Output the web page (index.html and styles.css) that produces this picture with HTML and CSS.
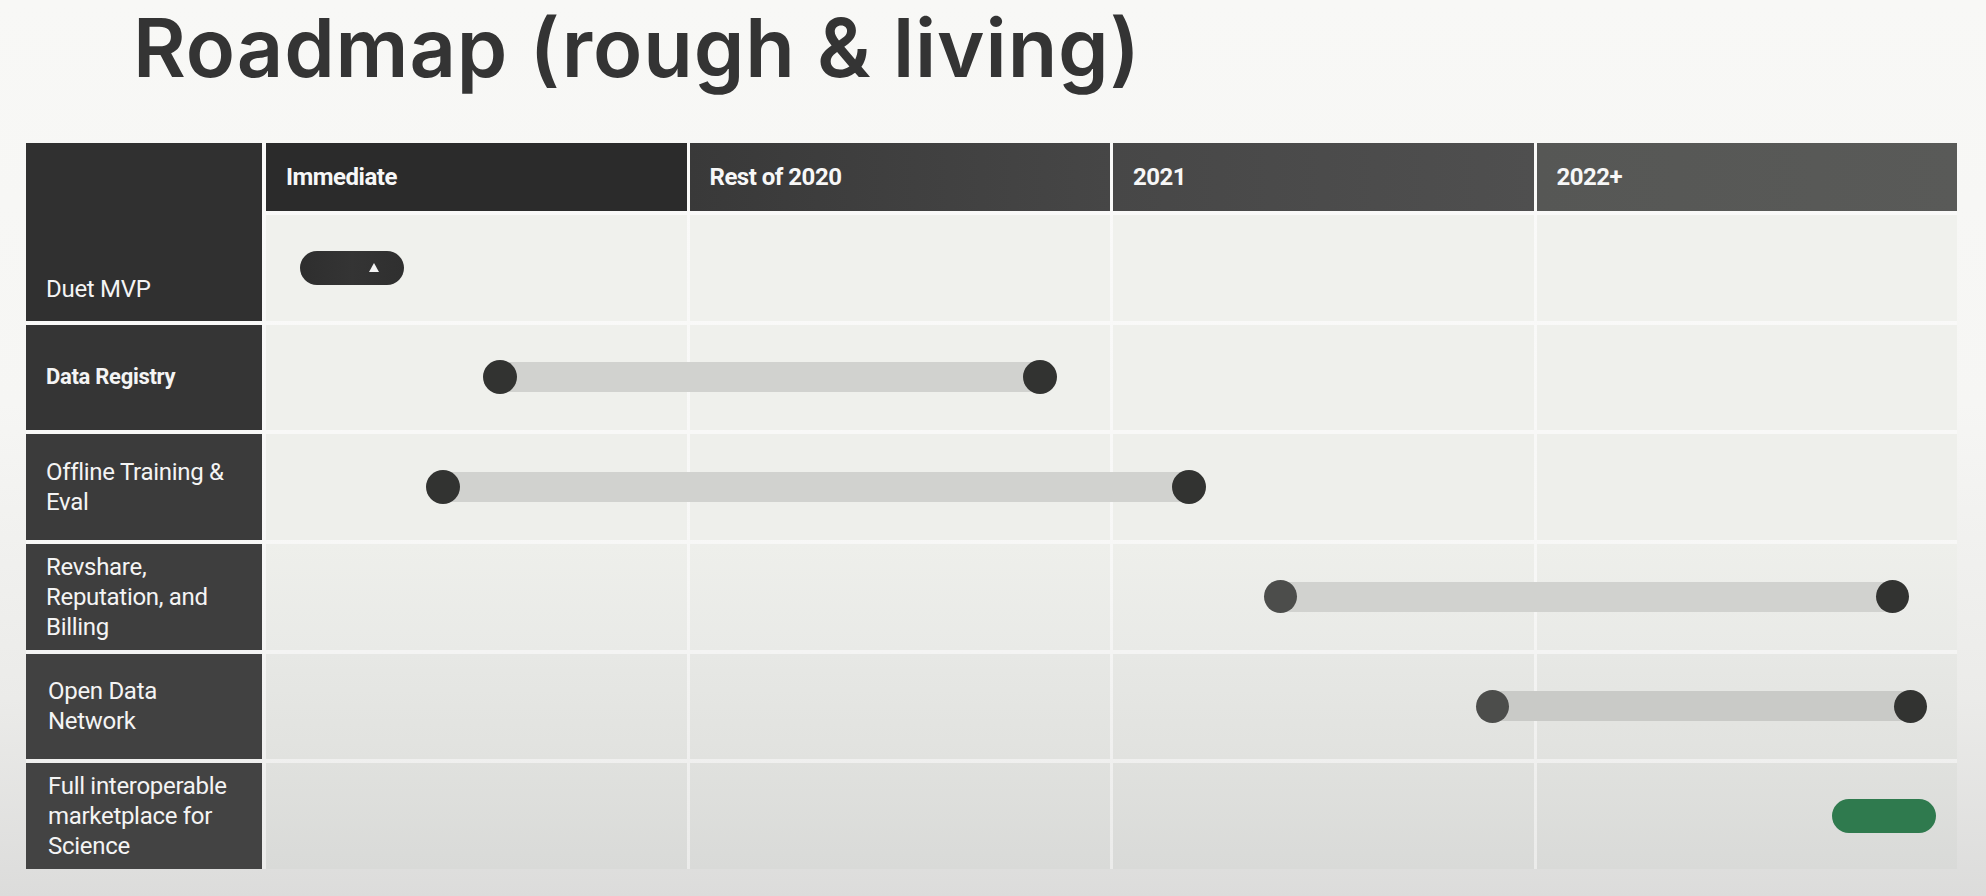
FILE: index.html
```html
<!DOCTYPE html>
<html lang="en">
<head>
<meta charset="utf-8">
<title>Roadmap (rough &amp; living)</title>
<link rel="stylesheet" href="styles.css">
</head>
<body>
<main class="slide">
  <h1 class="title">Roadmap (rough &amp; living)</h1>
  <section class="roadmap">
    <div class="label label-corner">Duet MVP</div>
    <div class="head-row">
      <div class="head h1">Immediate</div>
      <div class="head h2">Rest of 2020</div>
      <div class="head h3">2021</div>
      <div class="head h4">2022+</div>
    </div>

    <div class="track row-1">
      <div class="cell c1"></div><div class="cell c2"></div><div class="cell c3"></div><div class="cell c4"></div>
      <div class="pill pill-dark" style="margin-left:34px;width:104px"><span class="tri"></span></div>
    </div>

    <div class="label label-bold l2">Data Registry</div>
    <div class="track row-2">
      <div class="cell c1"></div><div class="cell c2"></div><div class="cell c3"></div><div class="cell c4"></div>
      <div class="bar" style="margin-left:217px;width:574px"><span class="dot"></span><span class="line"></span><span class="dot"></span></div>
    </div>

    <div class="label l3">Offline Training &amp; Eval</div>
    <div class="track row-3">
      <div class="cell c1"></div><div class="cell c2"></div><div class="cell c3"></div><div class="cell c4"></div>
      <div class="bar" style="margin-left:160px;width:780px"><span class="dot"></span><span class="line"></span><span class="dot"></span></div>
    </div>

    <div class="label l4">Revshare,<br>Reputation, and<br>Billing</div>
    <div class="track row-4">
      <div class="cell c1"></div><div class="cell c2"></div><div class="cell c3"></div><div class="cell c4"></div>
      <div class="bar bar-sm" style="margin-left:998px;width:645px"><span class="dot dot-soft"></span><span class="line"></span><span class="dot"></span></div>
    </div>

    <div class="label l5">Open Data<br>Network</div>
    <div class="track row-5">
      <div class="cell c1"></div><div class="cell c2"></div><div class="cell c3"></div><div class="cell c4"></div>
      <div class="bar bar-sm" style="margin-left:1210px;width:451px"><span class="dot dot-soft"></span><span class="line line-dark"></span><span class="dot"></span></div>
    </div>

    <div class="label l6">Full interoperable<br>marketplace for<br>Science</div>
    <div class="track row-6">
      <div class="cell c1"></div><div class="cell c2"></div><div class="cell c3"></div><div class="cell c4"></div>
      <div class="pill pill-green" style="margin-left:1566px;width:104px"></div>
    </div>
  </section>
</main>
</body>
</html>
```
FILE: styles.css
```css
html, body {
  margin: 0;
  padding: 0;
}

body {
  width: 1986px;
  height: 896px;
  overflow: hidden;
  font-family: Roboto, "Liberation Sans", sans-serif;
  background: linear-gradient(180deg, #f8f8f6 0%, #f6f6f4 45%, #ebebe9 78%, #dcdcdb 100%);
}

.slide {
  display: flex;
  flex-direction: column;
  padding-top: 7px;
}

.title {
  margin: 0 0 53px 133px;
  font-family: Inter, Roboto, "Liberation Sans", sans-serif;
  font-weight: 600;
  font-size: 81px;
  line-height: 83px;
  letter-spacing: 0.9px;
  color: #343434;
}

.roadmap {
  margin-left: 26px;
  width: 1931px;
  height: 726px;
  display: grid;
  grid-template-columns: 236px 1fr;
  grid-template-rows: 68px repeat(6, 1fr);
  gap: 4px;
  background: linear-gradient(180deg, #fafaf9 0%, #f7f7f6 60%, #ebebea 100%);
}

.head-row {
  display: grid;
  grid-template-columns: repeat(4, 1fr);
  gap: 3px;
}

.head {
  display: flex;
  align-items: center;
  padding-left: 20px;
  color: #f7f7f7;
  font-weight: 700;
  font-size: 24px;
  letter-spacing: -0.5px;
}

.h1 { background: #2b2b2b; }
.h2 { background: linear-gradient(90deg, #393939, #464646); }
.h3 { background: linear-gradient(90deg, #474747, #4f4f4f); }
.h4 { background: linear-gradient(90deg, #565755, #595a58); }

.label {
  display: flex;
  align-items: center;
  padding-left: 20px;
  color: #f4f4f4;
  font-size: 24px;
  line-height: 30px;
  letter-spacing: -0.3px;
}

.label-corner {
  grid-row: 1 / 3;
  align-items: flex-end;
  padding-bottom: 17px;
  background: #303030;
}

.label-bold {
  font-weight: 700;
  font-size: 22px;
}

.l2 { background: #353535; }
.l3 { background: #3b3b3b; }
.l4 { background: #3e3e3e; }
.l5 { background: #414141; padding-left: 22px; }
.l6 { background: #434343; padding-left: 22px; }

.track {
  display: grid;
  grid-template-columns: repeat(4, 1fr);
  grid-template-rows: 1fr;
  gap: 3px;
}

.cell {
  grid-row: 1;
  background: #eeefeb;
}

.c1 { grid-column: 1; }
.c2 { grid-column: 2; }
.c3 { grid-column: 3; }
.c4 { grid-column: 4; }

.row-1 .cell { background: #f0f1ed; }
.row-2 .cell { background: #eff0ec; }
.row-3 .cell { background: #eeefeb; }
.row-4 .cell { background: linear-gradient(180deg, #eeefeb, #e9eae7); }
.row-5 .cell { background: linear-gradient(180deg, #e7e8e5, #e1e2df); }
.row-6 .cell { background: linear-gradient(180deg, #e0e1de, #d9dad8); }

.bar, .pill {
  grid-row: 1;
  grid-column: 1 / -1;
  align-self: center;
  justify-self: start;
}

.bar {
  display: flex;
  align-items: center;
}

.dot {
  position: relative;
  flex: 0 0 auto;
  width: 34px;
  height: 34px;
  border-radius: 50%;
  background: #323331;
}

.bar-sm .dot {
  width: 33px;
  height: 33px;
}

.dot-soft {
  background: #4c4d4b;
}

.line {
  flex: 1;
  height: 30px;
  margin: 0 -17px;
  background: #d1d2cf;
}

.line-dark {
  background: #c9cac7;
}

.pill {
  height: 34px;
  border-radius: 17px;
  display: flex;
  align-items: center;
}

.pill-dark {
  background: linear-gradient(90deg, #2e2e2e 0%, #343434 50%, #2f2f2f 100%);
  padding-left: 69px;
  box-sizing: border-box;
}

.tri {
  width: 0;
  height: 0;
  border-left: 5px solid transparent;
  border-right: 5px solid transparent;
  border-bottom: 9px solid #f4f4f4;
}

.pill-green {
  background: #2f7a4e;
}
```
